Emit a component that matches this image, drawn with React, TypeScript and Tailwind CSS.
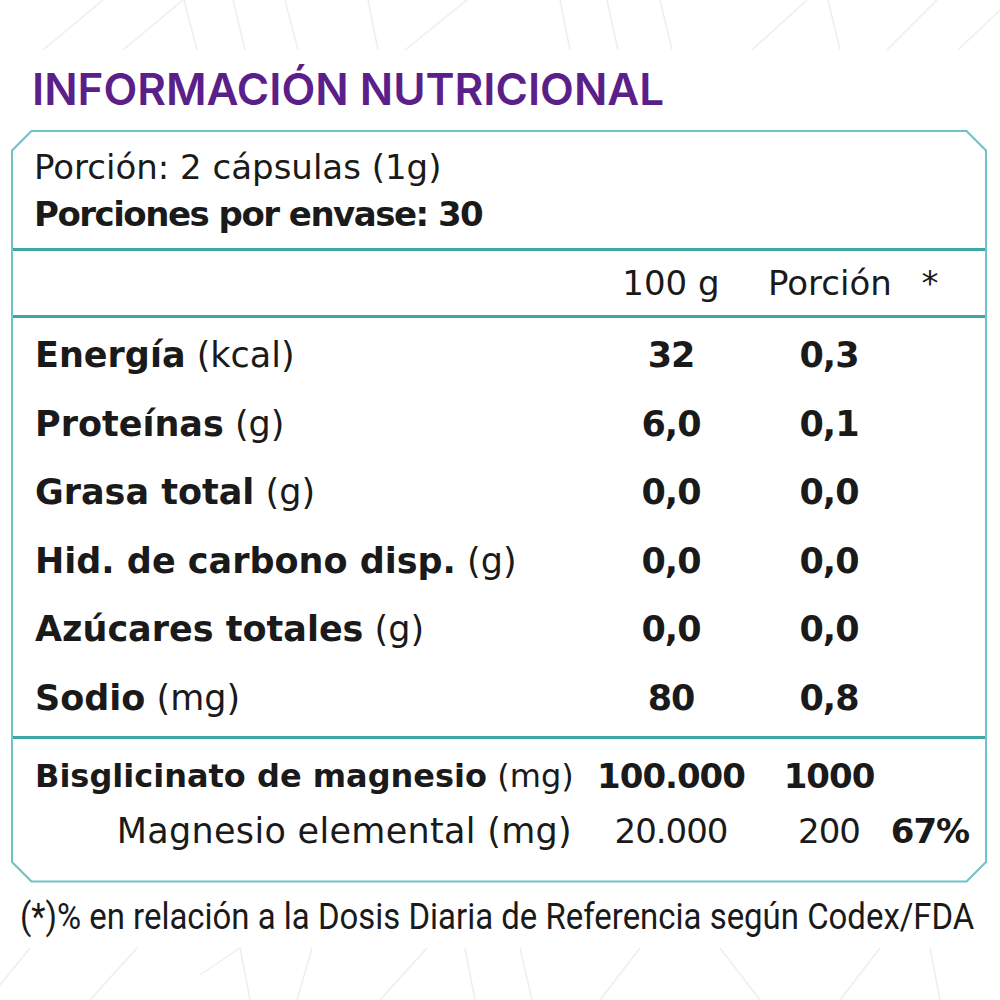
import React from "react";

const bodyFont = "font-['DejaVu_Sans','Noto_Sans',sans-serif]";

const nutrients = [
  { name: "Energía", unit: "(kcal)", per100: "32", portion: "0,3" },
  { name: "Proteínas", unit: "(g)", per100: "6,0", portion: "0,1" },
  { name: "Grasa total", unit: "(g)", per100: "0,0", portion: "0,0" },
  { name: "Hid. de carbono disp.", unit: "(g)", per100: "0,0", portion: "0,0" },
  { name: "Azúcares totales", unit: "(g)", per100: "0,0", portion: "0,0" },
  { name: "Sodio", unit: "(mg)", per100: "80", portion: "0,8" },
];

// faint line pattern at the top and bottom edges
const topLines: [number, number, number, number][] = [
  [43, 50, 103, 0],
  [123, 50, 183, 0],
  [184, 0, 197, 50],
  [233, 0, 245, 50],
  [285, 0, 298, 50],
  [368, 0, 378, 50],
  [405, 50, 467, 0],
  [560, 0, 570, 50],
  [607, 0, 618, 50],
  [660, 0, 672, 50],
  [752, 50, 807, 0],
  [828, 0, 840, 50],
  [887, 50, 937, 0],
  [958, 50, 1000, 10],
];

const bottomLines: [number, number, number, number][] = [
  [0, 985, 30, 948],
  [90, 1000, 137, 948],
  [200, 975, 240, 948],
  [240, 948, 250, 1000],
  [312, 948, 297, 1000],
  [380, 1000, 427, 948],
  [465, 948, 475, 1000],
  [520, 948, 532, 1000],
  [600, 1000, 640, 948],
  [720, 948, 760, 1000],
  [840, 1000, 880, 948],
  [930, 948, 940, 1000],
];

function Pattern() {
  return (
    <svg className="pointer-events-none absolute inset-0" width="1000" height="1000" viewBox="0 0 1000 1000">
      {[...topLines, ...bottomLines].map(([x1, y1, x2, y2], i) => (
        <line key={i} x1={x1} y1={y1} x2={x2} y2={y2} stroke="#eeeeee" strokeWidth="1.5" />
      ))}
    </svg>
  );
}

function Divider() {
  return <div className="h-[3px] w-full bg-[#3fa6a8]" />;
}

function ValueCells({ a, b, c, bold = true }: { a: string; b: string; c?: string; bold?: boolean }) {
  return (
    <>
      <div className={`w-[194px] shrink-0 text-center tracking-[-1px] ${bold ? "font-bold" : ""}`}>{a}</div>
      <div className={`w-[122px] shrink-0 text-center tracking-[-1px] ${bold ? "font-bold" : ""}`}>{b}</div>
      <div className="w-[80px] shrink-0 whitespace-nowrap text-center font-bold tracking-[-1px]">{c}</div>
    </>
  );
}

export default function App() {
  return (
    <div className={`relative h-[1000px] w-[1000px] overflow-hidden bg-white text-[#1a1a1a] ${bodyFont}`}>
      <Pattern />

      <h1 className="relative pl-[32px] pt-[62px] font-['Inter',sans-serif] text-[44px] font-semibold leading-[54px] text-[#5b1f8a]">
        INFORMACIÓN NUTRICIONAL
      </h1>

      <div className="relative ml-[11px] mt-[14px] w-[976px] bg-[#6fc2c5] p-[2px] [clip-path:polygon(20px_0,calc(100%-20px)_0,100%_20px,100%_calc(100%-20px),calc(100%-20px)_100%,20px_100%,0_calc(100%-20px),0_20px)]">
        <div className="bg-white [clip-path:polygon(19px_0,calc(100%-19px)_0,100%_19px,100%_calc(100%-19px),calc(100%-19px)_100%,19px_100%,0_calc(100%-19px),0_19px)]">
          <div className="flex flex-col pl-[21px] pt-[12px] pb-[10px] text-[34px] leading-[47px]">
            <span>Porción: 2 cápsulas (1g)</span>
            <span className="font-bold tracking-[-1.5px]">Porciones por envase: 30</span>
          </div>
          <Divider />

          <div className="flex h-[64px] items-center pr-[15px] text-[34px]">
            <div className="flex-1" />
            <div className="w-[194px] text-center">100 g</div>
            <div className="w-[122px] whitespace-nowrap text-center">Porción</div>
            <div className="w-[80px] text-center">*</div>
          </div>
          <Divider />

          <div className="flex flex-col pt-[3px] pb-[3px]">
            {nutrients.map((n) => (
              <div key={n.name} className="flex h-[68.6px] items-center pr-[15px] text-[35px]">
                <div className="min-w-0 flex-1 whitespace-nowrap pl-[22px]">
                  <span className="font-bold">{n.name}</span> <span>{n.unit}</span>
                </div>
                <ValueCells a={n.per100} b={n.portion} />
              </div>
            ))}
          </div>
          <Divider />

          <div className="flex flex-col pt-[10px] pb-[22px] text-[34px]">
            <div className="flex h-[55px] items-center pr-[15px]">
              <div className="min-w-0 flex-1 whitespace-nowrap pl-[22px] text-[32px]">
                <span className="font-bold">Bisglicinato de magnesio</span> <span>(mg)</span>
              </div>
              <ValueCells a="100.000" b="1000" />
            </div>
            <div className="flex h-[55px] items-center pr-[15px]">
              <div className="min-w-0 flex-1 whitespace-nowrap pr-[2px] text-right text-[35px] tracking-[0.3px]">
                Magnesio elemental (mg)
              </div>
              <ValueCells a="20.000" b="200" c="67%" bold={false} />
            </div>
          </div>
        </div>
      </div>

      <div className="relative mt-[11px] pl-[20px]">
        <span className="inline-block origin-left scale-x-[0.915] whitespace-nowrap font-['Roboto','Liberation_Sans',sans-serif] text-[36px] leading-[46px] text-[#1a1a1a]">
          (*)% en relación a la Dosis Diaria de Referencia según Codex/FDA
        </span>
      </div>
    </div>
  );
}
